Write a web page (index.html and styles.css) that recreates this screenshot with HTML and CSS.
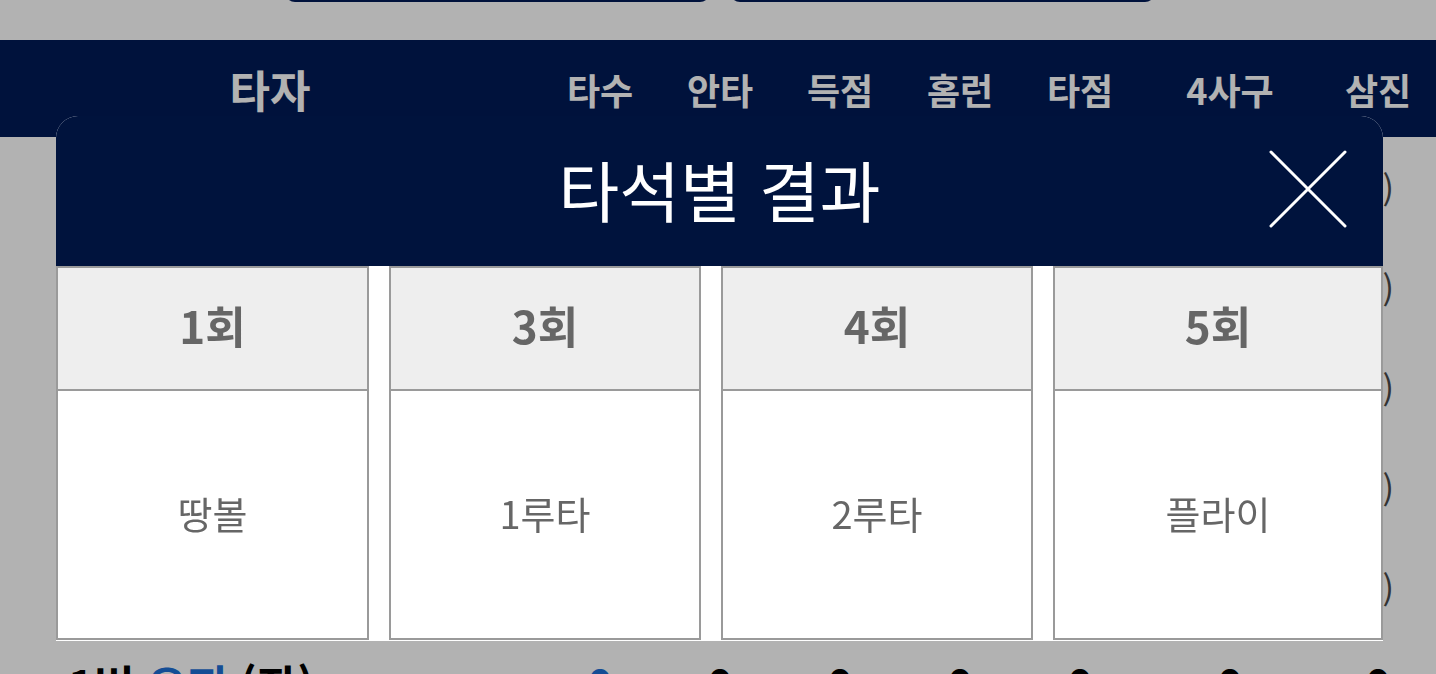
FILE: index.html
```html
<!DOCTYPE html>
<html lang="ko">
<head>
<meta charset="utf-8">
<title>타석별 결과</title>
<link rel="stylesheet" href="styles.css">
</head>
<body>
  <div class="page">
    <div class="tab-row">
      <div class="tab-btn"></div>
      <div class="tab-btn"></div>
    </div>

    <div class="stat-table">
      <div class="stat-head">
        <div class="cell cell-name">타자</div>
        <div class="cell">타수</div>
        <div class="cell">안타</div>
        <div class="cell">득점</div>
        <div class="cell">홈런</div>
        <div class="cell">타점</div>
        <div class="cell">4사구</div>
        <div class="cell">삼진</div>
      </div>
      <div class="stat-row prev">
        <div class="cell cell-name"></div><div class="cell"></div><div class="cell"></div><div class="cell"></div><div class="cell"></div><div class="cell"></div><div class="cell"></div>
        <div class="cell cell-last">(0)</div>
      </div>
      <div class="stat-row prev">
        <div class="cell cell-name"></div><div class="cell"></div><div class="cell"></div><div class="cell"></div><div class="cell"></div><div class="cell"></div><div class="cell"></div>
        <div class="cell cell-last">(1)</div>
      </div>
      <div class="stat-row prev">
        <div class="cell cell-name"></div><div class="cell"></div><div class="cell"></div><div class="cell"></div><div class="cell"></div><div class="cell"></div><div class="cell"></div>
        <div class="cell cell-last">(0)</div>
      </div>
      <div class="stat-row prev">
        <div class="cell cell-name"></div><div class="cell"></div><div class="cell"></div><div class="cell"></div><div class="cell"></div><div class="cell"></div><div class="cell"></div>
        <div class="cell cell-last">(2)</div>
      </div>
      <div class="stat-row prev">
        <div class="cell cell-name"></div><div class="cell"></div><div class="cell"></div><div class="cell"></div><div class="cell"></div><div class="cell"></div><div class="cell"></div>
        <div class="cell cell-last">(0)</div>
      </div>
      <div class="stat-row player">
        <div class="cell cell-name">1번 <span class="player-name">오지</span> (좌)</div>
        <div class="cell link">0</div>
        <div class="cell">0</div>
        <div class="cell">0</div>
        <div class="cell">0</div>
        <div class="cell">0</div>
        <div class="cell">0</div>
        <div class="cell">0</div>
      </div>
    </div>
  </div>

  <div class="overlay">
    <div class="modal">
      <div class="modal-head">
        <h2 class="modal-title">타석별 결과</h2>
        <button class="modal-close" type="button" aria-label="닫기">
          <svg viewBox="0 0 78 78" width="78" height="78">
            <path d="M2 2 L76 76 M76 2 L2 76" stroke="#fff" stroke-width="3" stroke-linecap="round" fill="none"/>
          </svg>
        </button>
      </div>
      <div class="inning-grid">
        <div class="inning">
          <div class="inning-head">1회</div>
          <div class="inning-body">땅볼</div>
        </div>
        <div class="inning">
          <div class="inning-head">3회</div>
          <div class="inning-body">1루타</div>
        </div>
        <div class="inning">
          <div class="inning-head">4회</div>
          <div class="inning-body">2루타</div>
        </div>
        <div class="inning">
          <div class="inning-head">5회</div>
          <div class="inning-body">플라이</div>
        </div>
      </div>
    </div>
  </div>
</body>
</html>
```

FILE: styles.css
```css
html, body {
  margin: 0;
  padding: 0;
  background: #fff;
  overflow: hidden;
}

body {
  font-family: "Noto Sans CJK KR", "Noto Sans", sans-serif;
  width: 1436px;
  height: 674px;
}

.page {
  width: 1436px;
}

/* top tab buttons, scrolled mostly out of view */
.tab-row {
  height: 40px;
  display: flex;
  align-items: flex-start;
  padding-left: 285px;
  gap: 20px;
}

.tab-btn {
  width: 425px;
  height: 50px;
  margin-top: -48px;
  background: #001a57;
  border-radius: 0 0 10px 10px;
}

/* batter stat table */
.stat-head,
.stat-row {
  display: grid;
  grid-template-columns: 540px repeat(5, 120px) 180px 1fr;
  align-items: center;
}

.stat-head {
  height: 97px;
  background: #001a57;
  color: #fff;
  font-weight: 700;
  font-size: 36px;
}

.stat-head .cell {
  text-align: center;
  line-height: 1;
}

.stat-head .cell-name {
  font-size: 44px;
}

.stat-row {
  height: 100px;
  font-size: 34px;
  color: #111;
}

.stat-row .cell {
  text-align: center;
}

.stat-row .cell-last {
  text-align: right;
  padding-right: 42px;
  color: #4a4a4a;
}

.stat-row.player {
  font-size: 44px;
  font-weight: 700;
  color: #000;
  align-items: start;
  padding-top: 15px;
  box-sizing: border-box;
}

.stat-row.player .cell-name {
  text-align: left;
  padding-left: 68px;
}

.player-name,
.link {
  color: #1d6fd6;
}

/* modal layer */
.overlay {
  position: fixed;
  inset: 0;
  background: rgba(0, 0, 0, 0.3);
}

.modal {
  position: absolute;
  left: 56px;
  top: 116px;
  width: 1327px;
  background: #fff;
  border-radius: 22px 22px 0 0;
  overflow: hidden;
}

.modal-head {
  height: 150px;
  background: #00133d;
  display: flex;
  align-items: center;
  justify-content: center;
  position: relative;
}

.modal-title {
  margin: 0 0 6px;
  color: #fff;
  font-weight: 400;
  font-size: 66px;
  line-height: 1;
  letter-spacing: 0;
}

.modal-close {
  position: absolute;
  right: 36px;
  top: 34px;
  width: 78px;
  height: 78px;
  padding: 0;
  border: 0;
  background: none;
}

.modal-close svg {
  display: block;
}

.inning-grid {
  display: grid;
  grid-template-columns: 313px 312px 312px 1fr;
  column-gap: 20px;
  height: 375px;
}

.inning {
  border: 2px solid #9a9a9a;
  height: 374px;
  box-sizing: border-box;
  display: flex;
  flex-direction: column;
  color: #666;
  text-align: center;
}

.inning-head {
  height: 123px;
  box-sizing: border-box;
  padding-bottom: 8px;
  background: #eeeeee;
  border-bottom: 2px solid #9a9a9a;
  font-weight: 700;
  font-size: 44px;
  display: flex;
  align-items: center;
  justify-content: center;
}

.inning-body {
  flex: 1;
  background: #fff;
  font-size: 38px;
  padding-bottom: 4px;
  display: flex;
  align-items: center;
  justify-content: center;
}
```
